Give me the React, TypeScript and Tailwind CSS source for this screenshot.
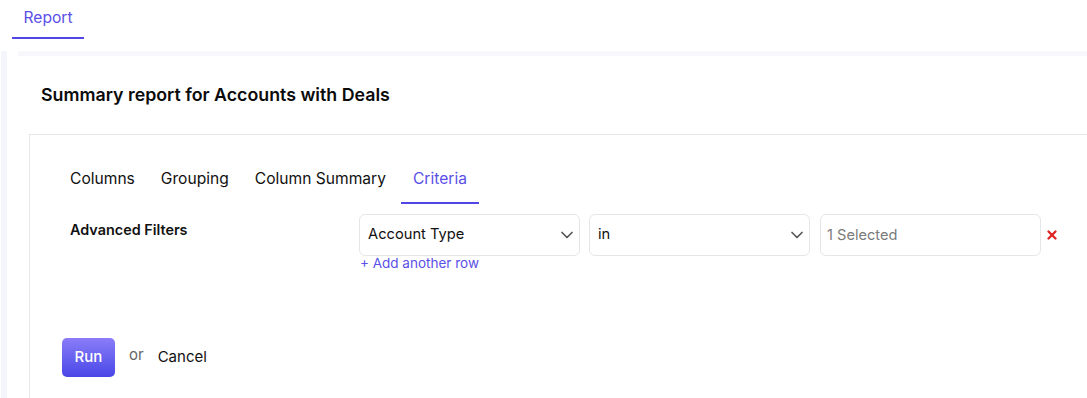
import { ChevronDown, X } from 'lucide-react';

const tabs = ['Columns', 'Grouping', 'Column Summary', 'Criteria'];

const Select = ({ value }: { value: string }) => (
  <div className="flex h-[42px] w-[221px] items-center justify-between rounded-[6px] border border-[#e6e6e6] bg-white pl-[8px] pr-[2px] text-[14.7px] text-[#111]">
    <span className="mb-[3px]">{value}</span>
    <ChevronDown className="text-[#555]" size={20} strokeWidth={2} />
  </div>
);

const App = () => {
  return (
    <div className="h-[398px] overflow-hidden bg-white font-['Inter',sans-serif] text-[#111]">
      {/* Top tabs */}
      <div className="flex h-[51px] items-start pl-[12px]">
        <div className="flex h-[39px] w-[72px] items-center justify-center border-b-2 border-[#4f46e5] pb-[2px] text-[15.6px] text-[#5a4fe6]">
          Report
        </div>
      </div>

      <div className="flex">
        <div className="ml-[1px] h-[347px] w-[6px] bg-[#f5f5fc]" />
        <div className="ml-[11px] flex-1">
          <div className="h-[5px] bg-[#f7f7fc]" />

          {/* Report card */}
          <div className="pt-[27px]">
            <h1 className="pl-[23px] text-[17.8px] font-semibold leading-[24px] text-[#0b0b0b]">
              Summary report for Accounts with Deals
            </h1>

            <div className="ml-[11px] mt-[27px] min-h-[300px] border-l border-t border-[#e8e8e8] pl-[40px] pt-[32px]">
              <div className="flex text-[15.6px]">
                {tabs.map((t, i) => (
                  <div
                    key={t}
                    className={
                      t === 'Criteria'
                        ? 'ml-[15px] border-b-2 border-[#4f46e5] px-[12px] pb-[12px] text-[#5a4fe6]'
                        : i === 0
                          ? 'pb-[12px] text-[#111]'
                          : 'ml-[26px] pb-[12px] text-[#111]'
                    }
                  >
                    {t}
                  </div>
                ))}
              </div>

              <div className="mt-[10px] flex items-start">
                <div className="w-[289px] pt-[5px] text-[14.4px] font-semibold text-[#111]">Advanced Filters</div>
                <div>
                  <div className="flex items-center">
                    <Select value="Account Type" />
                    <div className="ml-[9px]">
                      <Select value="in" />
                    </div>
                    <div className="ml-[10px] flex h-[42px] w-[221px] items-center rounded-[6px] border border-[#e6e6e6] bg-white pl-[6px] pt-[1px] text-[14.6px] text-[#7a7a7a]">
                      1 Selected
                    </div>
                    <X className="ml-[4px] text-[#e02424]" size={14} strokeWidth={4} />
                  </div>
                  <div className="mt-[-3px] pl-[1px] text-[13.5px] text-[#5a4fe6]">+ Add another row</div>
                </div>
              </div>

              <div className="mt-[64px] flex items-center">
                <button className="ml-[-8px] flex h-[39px] w-[53px] items-center justify-center rounded-[5px] bg-gradient-to-b from-[#8b7cf8] to-[#4a45e6] text-[15px] font-medium text-white">
                  Run
                </button>
                <span className="ml-[14px] mt-[-4px] text-[15px] text-[#666]">or</span>
                <span className="ml-[14px] text-[15px] text-[#111]">Cancel</span>
              </div>
            </div>
          </div>
        </div>
      </div>
    </div>
  );
};

export default App;
